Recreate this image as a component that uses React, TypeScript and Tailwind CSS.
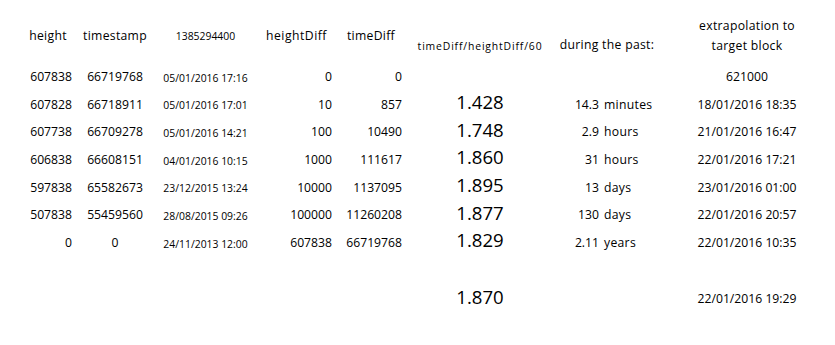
import React from "react";

type Row = {
  height: string;
  timestamp: string;
  date: string;
  heightDiff: string;
  timeDiff: string;
  ratio?: string;
  pastNum?: string;
  pastUnit?: string;
  target: string;
};

const rows: Row[] = [
  { height: "607838", timestamp: "66719768", date: "05/01/2016 17:16", heightDiff: "0", timeDiff: "0", target: "621000" },
  { height: "607828", timestamp: "66718911", date: "05/01/2016 17:01", heightDiff: "10", timeDiff: "857", ratio: "1.428", pastNum: "14.3", pastUnit: "minutes", target: "18/01/2016 18:35" },
  { height: "607738", timestamp: "66709278", date: "05/01/2016 14:21", heightDiff: "100", timeDiff: "10490", ratio: "1.748", pastNum: "2.9", pastUnit: "hours", target: "21/01/2016 16:47" },
  { height: "606838", timestamp: "66608151", date: "04/01/2016 10:15", heightDiff: "1000", timeDiff: "111617", ratio: "1.860", pastNum: "31", pastUnit: "hours", target: "22/01/2016 17:21" },
  { height: "597838", timestamp: "65582673", date: "23/12/2015 13:24", heightDiff: "10000", timeDiff: "1137095", ratio: "1.895", pastNum: "13", pastUnit: "days", target: "23/01/2016 01:00" },
  { height: "507838", timestamp: "55459560", date: "28/08/2015 09:26", heightDiff: "100000", timeDiff: "11260208", ratio: "1.877", pastNum: "130", pastUnit: "days", target: "22/01/2016 20:57" },
  { height: "0", timestamp: "0", date: "24/11/2013 12:00", heightDiff: "607838", timeDiff: "66719768", ratio: "1.829", pastNum: "2.11", pastUnit: "years", target: "22/01/2016 10:35" },
];

const rowHeights = ["h-[26.6px]", "h-[27.7px]", "h-[27.7px]", "h-[27.7px]", "h-[27.7px]", "h-[27.7px]", "h-[27.7px]"];

const DataRow = ({ row, h }: { row: Row; h: string }) => (
  <div className={`flex ${h} text-[12.2px] leading-none`}>
    <div className="flex w-[56px] items-end justify-end pr-1 pb-[3px]">{row.height}</div>
    <div className="flex w-[78px] items-end justify-center pb-[3px]">{row.timestamp}</div>
    <div className="flex w-[103px] items-end justify-center pb-[3.2px] text-[10.4px]">{row.date}</div>
    <div className="flex w-[79px] items-end justify-end pr-1 pb-[3px]">{row.heightDiff}</div>
    <div className="flex w-[70px] items-end justify-end pr-1 pb-[3px]">{row.timeDiff}</div>
    <div className="flex w-[148px] items-end justify-center pb-[2.3px] text-[18.6px]">{row.ratio}</div>
    <div className="flex w-[106px] items-end pb-[3px]">
      <span className="w-[45px] text-right">{row.pastNum}</span>
      {row.pastUnit && <span className="ml-[5px] tracking-[0.3px]">{row.pastUnit}</span>}
    </div>
    <div className="flex w-[174px] items-end justify-center pb-[3px]">{row.target}</div>
  </div>
);

export default function App() {
  return (
    <div className="h-[345px] w-[835px] bg-white pl-5 text-black" style={{ fontFamily: "'Open Sans', 'Liberation Sans', sans-serif" }}>
      {/* header */}
      <div className="flex h-[59.5px] text-[12.2px] leading-none tracking-[0.3px]">
        <div className="flex w-[56px] items-end justify-center pb-[17px]">height</div>
        <div className="flex w-[78px] items-end justify-center pb-[17px]">timestamp</div>
        <div className="flex w-[103px] items-end justify-center pb-[18.5px] text-[10.4px] tracking-normal">1385294400</div>
        <div className="flex w-[79px] items-end justify-center pb-[17px] tracking-[0.5px]">heightDiff</div>
        <div className="flex w-[70px] items-end justify-center pb-[17px]">timeDiff</div>
        <div className="flex w-[148px] items-end justify-center pb-[8.3px] text-[10.4px] tracking-[0.85px]">timeDiff/heightDiff/60</div>
        <div className="flex w-[106px] items-end justify-center pb-[8px]">during the past:</div>
        <div className="flex w-[174px] items-end justify-center pb-[3.8px] text-center leading-[20px]">
          extrapolation to
          <br />
          target block
        </div>
      </div>

      {rows.map((row, i) => (
        <DataRow key={i} row={row} h={rowHeights[i]} />
      ))}

      <div className="h-[28.15px]" />
      <div className="flex h-[28.15px] text-[12.2px] leading-none">
        <div className="w-[386px]" />
        <div className="flex w-[148px] items-end justify-center pb-[2.3px] text-[18.6px]">1.870</div>
        <div className="w-[106px]" />
        <div className="flex w-[174px] items-end justify-center pb-[3px]">22/01/2016 19:29</div>
      </div>
    </div>
  );
}
